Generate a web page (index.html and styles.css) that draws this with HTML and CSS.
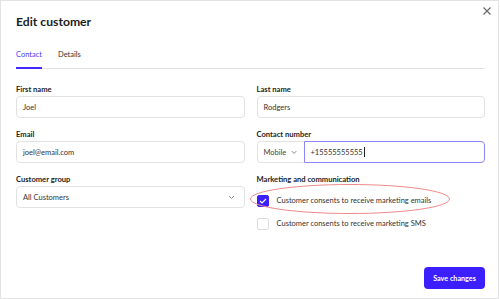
FILE: index.html
```html
<!DOCTYPE html>
<html lang="en">
<head>
  <meta charset="UTF-8">
  <title>Edit customer</title>
  <link rel="stylesheet" href="styles.css">
</head>
<body>
  <div class="modal">
    <button class="close" aria-label="Close">
      <svg width="8" height="8" viewBox="0 0 8 8"><path d="M0.5 0.5 L7.5 7.5 M7.5 0.5 L0.5 7.5" stroke="#6b6b6b" stroke-width="1.2" fill="none"/></svg>
    </button>

    <h1>Edit customer</h1>

    <div class="tabs">
      <span class="tab active">Contact</span>
      <span class="tab">Details</span>
    </div>

    <div class="form">
      <div class="field">
        <label>First name</label>
        <div class="input">Joel</div>
      </div>
      <div class="field">
        <label>Last name</label>
        <div class="input">Rodgers</div>
      </div>

      <div class="field">
        <label>Email</label>
        <div class="input">joel@email.com</div>
      </div>
      <div class="field">
        <label>Contact number</label>
        <div class="phone">
          <div class="prefix">Mobile
            <svg width="7" height="5" viewBox="0 0 7 5"><path d="M1 1 L3.5 3.5 L6 1" stroke="#777" stroke-width="1" fill="none"/></svg>
          </div>
          <div class="input number">+15555555555<span class="caret"></span></div>
        </div>
      </div>

      <div class="field">
        <label>Customer group</label>
        <div class="input select">All Customers
          <svg width="7" height="5" viewBox="0 0 7 5"><path d="M1 1 L3.5 3.5 L6 1" stroke="#888" stroke-width="1" fill="none"/></svg>
        </div>
      </div>
      <div class="field">
        <label>Marketing and communication</label>
        <div class="checks">
          <div class="check">
            <span class="box checked">
              <svg width="8" height="6" viewBox="0 0 8 6"><path d="M1 3 L3 5 L7 1" stroke="#fff" stroke-width="1.1" fill="none"/></svg>
            </span>
            Customer consents to receive marketing emails
          </div>
          <div class="check">
            <span class="box"></span>
            Customer consents to receive marketing SMS
          </div>
        </div>
      </div>
    </div>

    <div class="footer">
      <button class="save">Save changes</button>
    </div>

    <svg class="mark" width="202" height="32" viewBox="0 0 202 32">
      <ellipse cx="101" cy="16" rx="99.5" ry="14.5" stroke="#ef8a8a" stroke-width="1" fill="none"/>
    </svg>
  </div>
</body>
</html>
```

FILE: styles.css
```css
* {
  margin: 0;
  padding: 0;
  box-sizing: border-box;
}

body {
  font-family: 'Lato', 'Liberation Sans', sans-serif;
  color: #222;
  background: #fff;
}

.modal {
  position: relative;
  width: 499px;
  height: 299px;
  border: 1px solid #e3e3e3;
  padding: 0 13px 9px 15px;
  display: flex;
  flex-direction: column;
}

.close {
  position: absolute;
  top: 6px;
  right: 7px;
  border: none;
  background: none;
  line-height: 0;
}

h1 {
  font-size: 12.2px;
  font-weight: 700;
  line-height: 20px;
  margin-top: 11px;
  color: #1d1d1d;
}

.tabs {
  display: flex;
  gap: 16px;
  margin-top: 17px;
  border-bottom: 1px solid #e2e2e2;
}

.tab {
  font-size: 7.5px;
  line-height: 12px;
  padding-bottom: 6px;
  margin-bottom: -1px;
  border-bottom: 2px solid transparent;
  color: #333;
}

.tab.active {
  color: #4b3bff;
  border-bottom-color: #3f2bff;
}

.form {
  margin-top: 14px;
  display: grid;
  grid-template-columns: 1fr 1fr;
  column-gap: 12px;
  row-gap: 10px;
}

.field label {
  display: block;
  font-size: 7.6px;
  font-weight: 700;
  line-height: 12px;
  margin-bottom: 1px;
  color: #222;
}

.input {
  height: 22px;
  border: 1px solid #e2e2e2;
  border-radius: 4px;
  padding: 0 6px;
  font-size: 7.5px;
  display: flex;
  align-items: center;
  color: #333;
}

.select {
  justify-content: space-between;
  padding-right: 9px;
}

.phone {
  display: flex;
}

.prefix {
  width: 47px;
  height: 22px;
  border: 1px solid #e2e2e2;
  border-right: none;
  border-radius: 4px 0 0 4px;
  padding: 0 6px;
  font-size: 7.5px;
  color: #444;
  display: flex;
  align-items: center;
  gap: 5px;
}

.number {
  flex: 1;
  border: 1.5px solid #8a84ff;
  border-radius: 0 4px 4px 0;
  padding-left: 6px;
}

.caret {
  display: inline-block;
  width: 1px;
  height: 10px;
  background: #222;
  margin-left: 1px;
}

.checks {
  margin-top: 10px;
  display: flex;
  flex-direction: column;
  gap: 11px;
}

.check {
  display: flex;
  align-items: center;
  gap: 8px;
  font-size: 7.5px;
  line-height: 12px;
  color: #333;
}

.box {
  width: 12px;
  height: 12px;
  border: 1px solid #ddd;
  border-radius: 2px;
  display: flex;
  align-items: center;
  justify-content: center;
}

.box.checked {
  background: #3b1fff;
  border-color: #3b1fff;
}

.footer {
  margin-top: auto;
  display: flex;
  justify-content: flex-end;
}

.save {
  height: 22px;
  width: 61px;
  border: none;
  border-radius: 4px;
  background: #3b1fff;
  color: #fff;
  font-family: inherit;
  font-size: 7.2px;
  font-weight: 700;
}

.mark {
  position: absolute;
  left: 248px;
  top: 182px;
}
```
